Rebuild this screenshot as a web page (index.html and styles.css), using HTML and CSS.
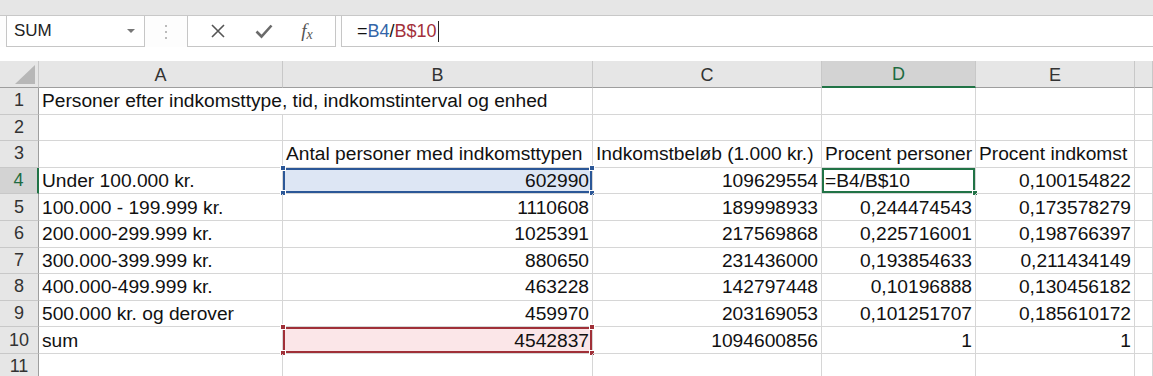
FILE: index.html
```html
<!DOCTYPE html>
<html lang="da">
<head>
    <meta charset="UTF-8">
    <title>Indkomst</title>
    <link rel="stylesheet" href="styles.css">
</head>
<body>
    <div class="topstrip"></div>

    <div class="fbar">
        <div class="namebox">
            <span>SUM</span>
            <svg class="drop" width="8" height="5" viewBox="0 0 8 5"><path d="M0 0H8L4 4Z" fill="#777"/></svg>
        </div>
        <div class="grip">
            <svg width="4" height="16" viewBox="0 0 4 16">
                <rect x="1" y="1" width="2" height="2" fill="#bbb"/>
                <rect x="1" y="7" width="2" height="2" fill="#bbb"/>
                <rect x="1" y="13" width="2" height="2" fill="#bbb"/>
            </svg>
        </div>
        <div class="fbtns">
            <svg width="16" height="16" viewBox="0 0 16 16"><path d="M2 2L14 14M14 2L2 14" stroke="#555" stroke-width="1.6" fill="none"/></svg>
            <svg width="18" height="16" viewBox="0 0 18 16"><path d="M1.5 8.5L6.5 13.5L16.5 2.5" stroke="#6a6a6a" stroke-width="2.6" fill="none"/></svg>
            <span class="fx">f<sub>x</sub></span>
        </div>
        <div class="finput">
            <span>=</span><span class="ref-blue">B4</span><span>/</span><span class="ref-red">B$10</span><span class="caret"></span>
        </div>
    </div>

    <div class="sheet">
        <div class="hd corner"><svg width="20" height="19" viewBox="0 0 20 19"><path d="M20 0V19H0Z" fill="#b7b7b7"/></svg></div>
        <div class="hd">A</div>
        <div class="hd">B</div>
        <div class="hd">C</div>
        <div class="hd hd-sel">D</div>
        <div class="hd">E</div>
        <div class="hd"></div>

        <div class="rn">1</div>
        <div class="c span2">Personer efter indkomsttype, tid, indkomstinterval og enhed</div>
        <div class="c"></div><div class="c"></div><div class="c"></div><div class="c"></div>

        <div class="rn">2</div>
        <div class="c"></div><div class="c"></div><div class="c"></div><div class="c"></div><div class="c"></div><div class="c"></div>

        <div class="rn">3</div>
        <div class="c"></div>
        <div class="c">Antal personer med indkomsttypen</div>
        <div class="c">Indkomstbeløb (1.000 kr.)</div>
        <div class="c">Procent personer</div>
        <div class="c">Procent indkomst</div>
        <div class="c"></div>

        <div class="rn rn-sel">4</div>
        <div class="c">Under 100.000 kr.</div>
        <div class="c num sel-blue">602990<i class="h tl"></i><i class="h tr"></i><i class="h bl"></i><i class="h br"></i></div>
        <div class="c num">109629554</div>
        <div class="c active">=B4/B$10<i class="fill"></i></div>
        <div class="c num">0,100154822</div>
        <div class="c"></div>

        <div class="rn">5</div>
        <div class="c">100.000 - 199.999 kr.</div>
        <div class="c num">1110608</div>
        <div class="c num">189998933</div>
        <div class="c num">0,244474543</div>
        <div class="c num">0,173578279</div>
        <div class="c"></div>

        <div class="rn">6</div>
        <div class="c">200.000-299.999 kr.</div>
        <div class="c num">1025391</div>
        <div class="c num">217569868</div>
        <div class="c num">0,225716001</div>
        <div class="c num">0,198766397</div>
        <div class="c"></div>

        <div class="rn">7</div>
        <div class="c">300.000-399.999 kr.</div>
        <div class="c num">880650</div>
        <div class="c num">231436000</div>
        <div class="c num">0,193854633</div>
        <div class="c num">0,211434149</div>
        <div class="c"></div>

        <div class="rn">8</div>
        <div class="c">400.000-499.999 kr.</div>
        <div class="c num">463228</div>
        <div class="c num">142797448</div>
        <div class="c num">0,10196888</div>
        <div class="c num">0,130456182</div>
        <div class="c"></div>

        <div class="rn">9</div>
        <div class="c">500.000 kr. og derover</div>
        <div class="c num">459970</div>
        <div class="c num">203169053</div>
        <div class="c num">0,101251707</div>
        <div class="c num">0,185610172</div>
        <div class="c"></div>

        <div class="rn">10</div>
        <div class="c">sum</div>
        <div class="c num sel-red">4542837<i class="h tl"></i><i class="h tr"></i><i class="h bl"></i><i class="h br"></i></div>
        <div class="c num">1094600856</div>
        <div class="c num">1</div>
        <div class="c num">1</div>
        <div class="c"></div>

        <div class="rn">11</div>
        <div class="c"></div><div class="c"></div><div class="c"></div><div class="c"></div><div class="c"></div><div class="c"></div>
    </div>
</body>
</html>
```

FILE: styles.css
```css
*{
    margin: 0;
    padding: 0;
    box-sizing: border-box;
}
body{
    width: 1153px;
    height: 376px;
    overflow: hidden;
    background: #fff;
    font-family: "Liberation Sans", Arial, sans-serif;
    color: #111;
}
.topstrip{
    height: 16px;
    background: #e6e6e6;
    border-bottom: 1px solid #c8c8c8;
}
.fbar{
    height: 31px;
    display: flex;
    background: #fdfdfd;
}
.namebox{
    width: 139px;
    margin-left: 6px;
    border: 1px solid #c6c6c6;
    border-top: none;
    display: flex;
    align-items: center;
    justify-content: space-between;
    padding: 0 9px 0 7px;
    font-size: 17px;
    color: #222;
    background: #fff;
}
.grip{
    width: 42px;
    display: flex;
    align-items: center;
    justify-content: center;
}
.fbtns{
    width: 149px;
    border: 1px solid #c6c6c6;
    border-top: none;
    display: flex;
    align-items: center;
    justify-content: space-around;
    padding: 0 8px 0 8px;
    background: #fff;
}
.fx{
    font: italic 19px "Liberation Serif", serif;
    color: #555;
}
.fx sub{
    font-size: 14px;
    vertical-align: -2px;
}
.finput{
    flex: 1;
    margin-left: 5px;
    border: 1px solid #c6c6c6;
    border-top: none;
    border-right: none;
    display: flex;
    align-items: center;
    padding-left: 15px;
    font-size: 18px;
    background: #fff;
}
.ref-blue{
    color: #3465a8;
}
.ref-red{
    color: #a3303a;
}
.caret{
    width: 1px;
    height: 21px;
    background: #222;
    margin-left: 1px;
}
.sheet{
    margin-top: 14px;
    display: grid;
    grid-template-columns: 39px 244px 310px 229px 154px 159px 1fr;
    grid-template-rows: 27px repeat(11, 26.6px);
    font-size: 19.2px;
}
.hd{
    background: #e6e6e6;
    border-right: 1px solid #c8c8c8;
    border-bottom: 1px solid #9e9e9e;
    display: flex;
    align-items: center;
    justify-content: center;
    color: #333;
    padding-top: 2px;
    font-size: 18px;
}
.corner{
    justify-content: flex-end;
    align-items: flex-end;
    padding: 0 3px 3px 0;
}
.hd-sel{
    background: #d3d3d3;
    color: #1e6b41;
    border-bottom: 2px solid #217346;
}
.rn{
    background: #e6e6e6;
    border-right: 1px solid #9e9e9e;
    border-bottom: 1px solid #c8c8c8;
    display: flex;
    align-items: center;
    justify-content: center;
    color: #333;
    font-size: 18px;
}
.rn-sel{
    background: #d3d3d3;
    color: #1e6b41;
    border-right: 2px solid #217346;
}
.c{
    border-right: 1px solid #d6d6d6;
    border-bottom: 1px solid #d6d6d6;
    display: flex;
    align-items: center;
    padding: 1px 3px 0 3px;
    white-space: nowrap;
    position: relative;
}
.span2{
    grid-column: span 2;
}
.num{
    justify-content: flex-end;
}
.sel-blue{
    background: #dde6f4;
    box-shadow: inset 0 0 0 2px #2b5797;
}
.sel-red{
    background: #fbe6e8;
    box-shadow: inset 0 0 0 2px #a03038;
}
.h{
    position: absolute;
    width: 6px;
    height: 6px;
    border: 1px solid #fff;
}
.sel-blue .h{
    background: #2b5797;
}
.sel-red .h{
    background: #a03038;
}
.tl{ left: -3px; top: -3px; }
.tr{ right: -3px; top: -3px; }
.bl{ left: -3px; bottom: -3px; }
.br{ right: -3px; bottom: -3px; }
.active{
    box-shadow: inset 0 0 0 2px #217346;
}
.fill{
    position: absolute;
    right: -3px;
    bottom: -3px;
    width: 6px;
    height: 6px;
    background: #217346;
    border: 1px solid #fff;
}
```
